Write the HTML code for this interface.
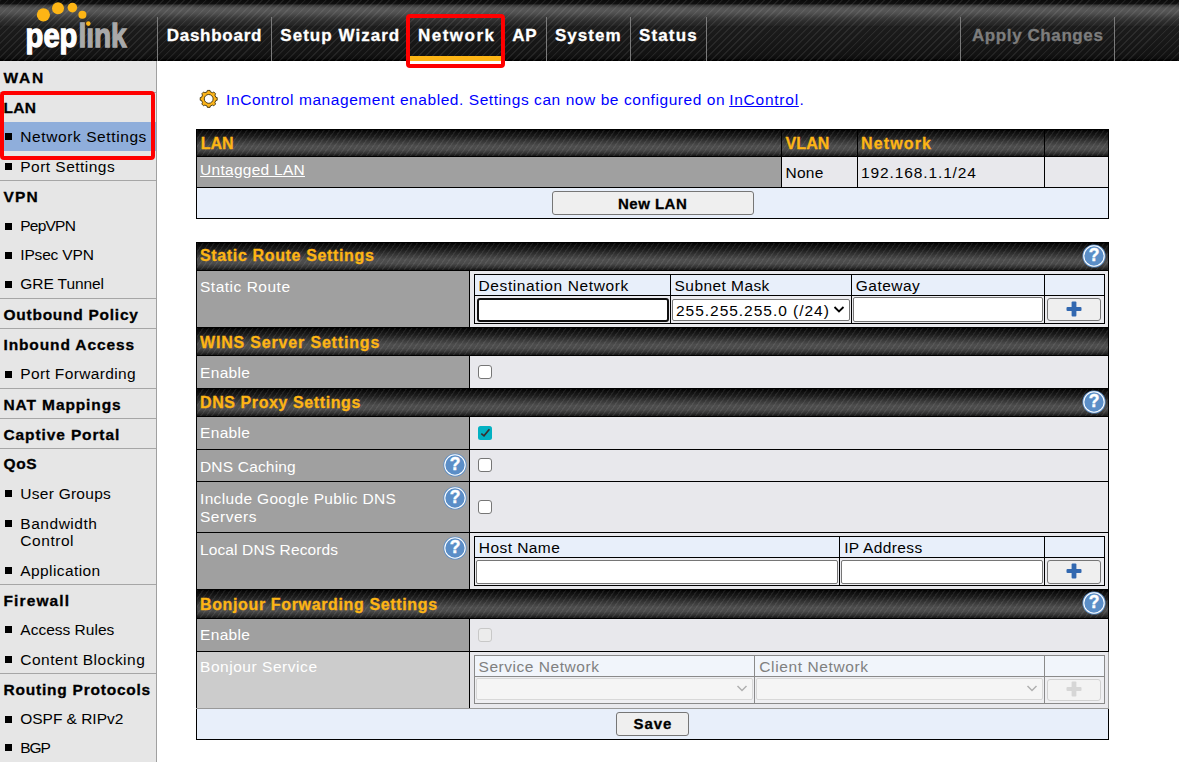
<!DOCTYPE html>
<html><head><meta charset="utf-8"><style>
html,body{margin:0;padding:0;width:1179px;height:762px;overflow:hidden;background:#fff;}
body{position:relative;font-family:"Liberation Sans",sans-serif;}
div{position:absolute;box-sizing:border-box;}
.t{position:absolute;white-space:nowrap;font-family:"Liberation Sans",sans-serif;}
svg{overflow:visible}
</style></head><body>
<div style="left:0px;top:0px;width:1179px;height:61px;background:repeating-linear-gradient(135deg, rgba(255,255,255,0.08) 0px, rgba(255,255,255,0.08) 0.9px, rgba(255,255,255,0) 1.6px, rgba(255,255,255,0) 5px),linear-gradient(to bottom, #0a0a0a 0px, #101010 3.5px, #3a3a3a 5.5px, #525252 8px, #565656 11px, #4c4c4c 14px, #383838 18px, #2a2a2a 22px, #252525 25px, #1c1c1c 26.5px, #181818 40px, #121212 55px, #0c0c0c 59px, #000 60px, #000 61px)"></div>
<div style="left:157px;top:17px;width:1px;height:44px;background:#7a7a7a"></div>
<div style="left:271px;top:17px;width:1px;height:44px;background:#7a7a7a"></div>
<div style="left:408px;top:17px;width:1px;height:44px;background:#7a7a7a"></div>
<div style="left:503px;top:17px;width:1px;height:44px;background:#7a7a7a"></div>
<div style="left:546px;top:17px;width:1px;height:44px;background:#7a7a7a"></div>
<div style="left:630px;top:17px;width:1px;height:44px;background:#7a7a7a"></div>
<div style="left:706px;top:17px;width:1px;height:44px;background:#7a7a7a"></div>
<div style="left:960px;top:17px;width:1px;height:44px;background:#7a7a7a"></div>
<div style="left:1114px;top:17px;width:1px;height:44px;background:#7a7a7a"></div>
<span class="t" style="left:166.70px;top:25.61px;font-size:17px;font-weight:bold;color:#fff;letter-spacing:0.738px;line-height:20px;-webkit-text-stroke:0.3px #fff;">Dashboard</span>
<span class="t" style="left:280.30px;top:25.61px;font-size:17px;font-weight:bold;color:#fff;letter-spacing:1.036px;line-height:20px;-webkit-text-stroke:0.3px #fff;">Setup Wizard</span>
<span class="t" style="left:418.00px;top:25.61px;font-size:17px;font-weight:bold;color:#fff;letter-spacing:1.483px;line-height:20px;-webkit-text-stroke:0.3px #fff;">Network</span>
<span class="t" style="left:512.30px;top:25.61px;font-size:17px;font-weight:bold;color:#fff;letter-spacing:0.700px;line-height:20px;-webkit-text-stroke:0.3px #fff;">AP</span>
<span class="t" style="left:555.00px;top:25.61px;font-size:17px;font-weight:bold;color:#fff;letter-spacing:1.020px;line-height:20px;-webkit-text-stroke:0.3px #fff;">System</span>
<span class="t" style="left:639.00px;top:25.61px;font-size:17px;font-weight:bold;color:#fff;letter-spacing:1.140px;line-height:20px;-webkit-text-stroke:0.3px #fff;">Status</span>
<span class="t" style="left:972.00px;top:25.61px;font-size:17px;font-weight:bold;color:#7d7d7d;letter-spacing:0.592px;line-height:20px;-webkit-text-stroke:0.3px #7d7d7d;">Apply Changes</span>
<div style="left:409px;top:56px;width:94px;height:5px;background:#fdb515"></div>
<svg style="position:absolute;left:0;top:0" width="157" height="61" viewBox="0 0 157 61">
<g fill="#fdb515"><circle cx="43.4" cy="14.8" r="6.6"/><circle cx="58" cy="8.3" r="6"/><circle cx="72.4" cy="7.6" r="4.8"/><circle cx="82.4" cy="14.8" r="4"/><circle cx="88.3" cy="23.6" r="2.3"/></g>
<text x="25.6" y="47.3" font-family="Liberation Sans" font-weight="bold" font-size="34" fill="#fff" stroke="#fff" stroke-width="1.3" textLength="51.8" lengthAdjust="spacingAndGlyphs">pep</text>
<text x="78.4" y="47.3" font-family="Liberation Sans" font-weight="bold" font-size="34" fill="#a9a9a9" stroke="#a9a9a9" stroke-width="1.3" textLength="48.3" lengthAdjust="spacingAndGlyphs">l&#x131;nk</text>
</svg>
<div style="left:0px;top:61px;width:156px;height:701px;background:#e6e6e6"></div>
<div style="left:156px;top:61px;width:1px;height:701px;background:#a0a0a0"></div>
<div style="left:0px;top:92px;width:156px;height:1px;background:#a6a6a6"></div>
<div style="left:0px;top:180px;width:156px;height:1px;background:#a6a6a6"></div>
<div style="left:0px;top:298px;width:156px;height:1px;background:#a6a6a6"></div>
<div style="left:0px;top:328px;width:156px;height:1px;background:#a6a6a6"></div>
<div style="left:0px;top:388px;width:156px;height:1px;background:#a6a6a6"></div>
<div style="left:0px;top:418px;width:156px;height:1px;background:#a6a6a6"></div>
<div style="left:0px;top:448px;width:156px;height:1px;background:#a6a6a6"></div>
<div style="left:0px;top:584px;width:156px;height:1px;background:#a6a6a6"></div>
<div style="left:0px;top:673px;width:156px;height:1px;background:#a6a6a6"></div>
<div style="left:0px;top:122px;width:156px;height:29px;background:#8faedb"></div>
<span class="t" style="left:3.50px;top:68.13px;font-size:15.5px;font-weight:bold;color:#000;letter-spacing:1.750px;line-height:20px;-webkit-text-stroke:0.3px #000;">WAN</span>
<span class="t" style="left:3.50px;top:98.13px;font-size:15.5px;font-weight:bold;color:#000;letter-spacing:0.300px;line-height:20px;-webkit-text-stroke:0.3px #000;">LAN</span>
<div style="left:5px;top:133.0px;width:7px;height:7px;background:#000"></div>
<span class="t" style="left:20.30px;top:126.63px;font-size:15.5px;font-weight:normal;color:#000;letter-spacing:0.593px;line-height:20px;">Network Settings</span>
<div style="left:5px;top:163.0px;width:7px;height:7px;background:#000"></div>
<span class="t" style="left:20.30px;top:156.63px;font-size:15.5px;font-weight:normal;color:#000;letter-spacing:0.467px;line-height:20px;">Port Settings</span>
<span class="t" style="left:3.50px;top:187.13px;font-size:15.5px;font-weight:bold;color:#000;letter-spacing:1.150px;line-height:20px;-webkit-text-stroke:0.3px #000;">VPN</span>
<div style="left:5px;top:222.5px;width:7px;height:7px;background:#000"></div>
<span class="t" style="left:20.30px;top:216.13px;font-size:15.5px;font-weight:normal;color:#000;letter-spacing:-0.780px;line-height:20px;">PepVPN</span>
<div style="left:5px;top:251.5px;width:7px;height:7px;background:#000"></div>
<span class="t" style="left:20.30px;top:245.13px;font-size:15.5px;font-weight:normal;color:#000;letter-spacing:-0.175px;line-height:20px;">IPsec VPN</span>
<div style="left:5px;top:280.5px;width:7px;height:7px;background:#000"></div>
<span class="t" style="left:20.30px;top:274.13px;font-size:15.5px;font-weight:normal;color:#000;letter-spacing:-0.078px;line-height:20px;">GRE Tunnel</span>
<span class="t" style="left:3.50px;top:305.13px;font-size:15.5px;font-weight:bold;color:#000;letter-spacing:0.743px;line-height:20px;-webkit-text-stroke:0.3px #000;">Outbound Policy</span>
<span class="t" style="left:3.50px;top:334.73px;font-size:15.5px;font-weight:bold;color:#000;letter-spacing:0.877px;line-height:20px;-webkit-text-stroke:0.3px #000;">Inbound Access</span>
<div style="left:5px;top:370.5px;width:7px;height:7px;background:#000"></div>
<span class="t" style="left:20.30px;top:364.13px;font-size:15.5px;font-weight:normal;color:#000;letter-spacing:0.364px;line-height:20px;">Port Forwarding</span>
<span class="t" style="left:3.50px;top:394.83px;font-size:15.5px;font-weight:bold;color:#000;letter-spacing:0.891px;line-height:20px;-webkit-text-stroke:0.3px #000;">NAT Mappings</span>
<span class="t" style="left:3.50px;top:424.73px;font-size:15.5px;font-weight:bold;color:#000;letter-spacing:0.885px;line-height:20px;-webkit-text-stroke:0.3px #000;">Captive Portal</span>
<span class="t" style="left:3.50px;top:454.33px;font-size:15.5px;font-weight:bold;color:#000;letter-spacing:0.600px;line-height:20px;-webkit-text-stroke:0.3px #000;">QoS</span>
<div style="left:5px;top:490.0px;width:7px;height:7px;background:#000"></div>
<span class="t" style="left:20.30px;top:483.63px;font-size:15.5px;font-weight:normal;color:#000;letter-spacing:0.260px;line-height:20px;">User Groups</span>
<div style="left:5px;top:519.9px;width:7px;height:7px;background:#000"></div>
<span class="t" style="left:20.30px;top:513.53px;font-size:15.5px;font-weight:normal;color:#000;letter-spacing:0.537px;line-height:20px;">Bandwidth</span>
<span class="t" style="left:20.30px;top:531.43px;font-size:15.5px;font-weight:normal;color:#000;letter-spacing:0.550px;line-height:20px;">Control</span>
<div style="left:5px;top:567.0px;width:7px;height:7px;background:#000"></div>
<span class="t" style="left:20.30px;top:560.63px;font-size:15.5px;font-weight:normal;color:#000;letter-spacing:0.410px;line-height:20px;">Application</span>
<span class="t" style="left:3.50px;top:590.63px;font-size:15.5px;font-weight:bold;color:#000;letter-spacing:1.114px;line-height:20px;-webkit-text-stroke:0.3px #000;">Firewall</span>
<div style="left:5px;top:626.4px;width:7px;height:7px;background:#000"></div>
<span class="t" style="left:20.30px;top:620.03px;font-size:15.5px;font-weight:normal;color:#000;letter-spacing:0.009px;line-height:20px;">Access Rules</span>
<div style="left:5px;top:656.3px;width:7px;height:7px;background:#000"></div>
<span class="t" style="left:20.30px;top:649.93px;font-size:15.5px;font-weight:normal;color:#000;letter-spacing:0.487px;line-height:20px;">Content Blocking</span>
<span class="t" style="left:3.50px;top:679.73px;font-size:15.5px;font-weight:bold;color:#000;letter-spacing:0.775px;line-height:20px;-webkit-text-stroke:0.3px #000;">Routing Protocols</span>
<div style="left:5px;top:715.5px;width:7px;height:7px;background:#000"></div>
<span class="t" style="left:20.30px;top:709.13px;font-size:15.5px;font-weight:normal;color:#000;letter-spacing:-0.036px;line-height:20px;">OSPF &amp; RIPv2</span>
<div style="left:5px;top:743.9px;width:7px;height:7px;background:#000"></div>
<span class="t" style="left:20.30px;top:737.53px;font-size:15.5px;font-weight:normal;color:#000;letter-spacing:-1.050px;line-height:20px;">BGP</span>
<svg style="position:absolute;left:0;top:0" width="230" height="120"><path fill="#fbb41a" stroke="#2a2000" stroke-width="0.8" stroke-linejoin="round" fill-rule="evenodd" d="M207.06,91.79 L207.35,90.41 L210.05,90.41 L210.34,91.79 L212.57,92.71 L213.75,91.94 L215.66,93.85 L214.89,95.03 L215.81,97.26 L217.19,97.55 L217.19,100.25 L215.81,100.54 L214.89,102.77 L215.66,103.95 L213.75,105.86 L212.57,105.09 L210.34,106.01 L210.05,107.39 L207.35,107.39 L207.06,106.01 L204.83,105.09 L203.65,105.86 L201.74,103.95 L202.51,102.77 L201.59,100.54 L200.21,100.25 L200.21,97.55 L201.59,97.26 L202.51,95.03 L201.74,93.85 L203.65,91.94 L204.83,92.71 Z M213.10,98.90 A4.4,4.4 0 1 0 204.30,98.90 A4.4,4.4 0 1 0 213.10,98.90 Z"/></svg>
<span class="t" style="left:226.10px;top:90.33px;font-size:15.5px;font-weight:normal;color:#0000ff;letter-spacing:0.563px;line-height:20px;">InControl management enabled. Settings can now be configured on</span>
<span class="t" style="left:729.20px;top:90.33px;font-size:15.5px;font-weight:normal;color:#0000ff;letter-spacing:0.750px;line-height:20px;text-decoration:underline;">InControl</span>
<span class="t" style="left:799.50px;top:90.33px;font-size:15.5px;font-weight:normal;color:#0000ff;letter-spacing:0.000px;line-height:20px;">.</span>
<div style="left:196px;top:129px;width:913px;height:90px;background:#000"></div>
<div style="left:197px;top:130px;width:911px;height:26px;background:repeating-linear-gradient(125deg, rgba(255,255,255,0.075) 0px, rgba(255,255,255,0.075) 0.9px, rgba(255,255,255,0) 1.6px, rgba(255,255,255,0) 4.5px),linear-gradient(to bottom, #000 0%, #0c0c0c 8%, #1c1c1c 25%, #383838 45%, #4e4e4e 62%, #4a4a4a 76%, #303030 90%, #141414 100%)"></div>
<div style="left:197px;top:157px;width:584px;height:30px;background:#a0a0a0"></div>
<div style="left:782px;top:157px;width:75px;height:30px;background:#e8e8ec"></div>
<div style="left:858px;top:157px;width:186px;height:30px;background:#e8e8ec"></div>
<div style="left:1045px;top:157px;width:63px;height:30px;background:#e8e8ec"></div>
<div style="left:197px;top:188px;width:911px;height:30px;background:#e8effa"></div>
<div style="left:781px;top:130px;width:1px;height:26px;background:#000"></div>
<div style="left:857px;top:130px;width:1px;height:26px;background:#000"></div>
<div style="left:1044px;top:130px;width:1px;height:26px;background:#000"></div>
<span class="t" style="left:200.70px;top:133.76px;font-size:16px;font-weight:bold;color:#fdb515;letter-spacing:-0.050px;line-height:20px;-webkit-text-stroke:0.3px #fdb515;">LAN</span>
<span class="t" style="left:785.60px;top:133.66px;font-size:16px;font-weight:bold;color:#fdb515;letter-spacing:0.067px;line-height:20px;-webkit-text-stroke:0.3px #fdb515;">VLAN</span>
<span class="t" style="left:861.10px;top:133.66px;font-size:16px;font-weight:bold;color:#fdb515;letter-spacing:1.133px;line-height:20px;-webkit-text-stroke:0.3px #fdb515;">Network</span>
<span class="t" style="left:200.10px;top:159.53px;font-size:15.5px;font-weight:normal;color:#fff;letter-spacing:0.264px;line-height:20px;text-decoration:underline;">Untagged LAN</span>
<span class="t" style="left:785.60px;top:162.83px;font-size:15.5px;font-weight:normal;color:#000;letter-spacing:0.200px;line-height:20px;">None</span>
<span class="t" style="left:861.10px;top:162.83px;font-size:15.5px;font-weight:normal;color:#000;letter-spacing:0.877px;line-height:20px;">192.168.1.1/24</span>
<div style="left:552px;top:191px;width:202px;height:24px;background:#efefef;border:1px solid #767676;border-radius:3px"></div>
<span class="t" style="left:618.00px;top:194.20px;font-size:15px;font-weight:bold;color:#000;letter-spacing:0.483px;line-height:20px;-webkit-text-stroke:0.3px #000;">New LAN</span>
<div style="left:196px;top:242px;width:913px;height:498px;background:#000"></div>
<div style="left:197px;top:243px;width:911px;height:27px;background:repeating-linear-gradient(125deg, rgba(255,255,255,0.075) 0px, rgba(255,255,255,0.075) 0.9px, rgba(255,255,255,0) 1.6px, rgba(255,255,255,0) 4.5px),linear-gradient(to bottom, #000 0%, #0c0c0c 8%, #1c1c1c 25%, #383838 45%, #4e4e4e 62%, #4a4a4a 76%, #303030 90%, #141414 100%)"></div>
<span class="t" style="left:200.00px;top:245.96px;font-size:16px;font-weight:bold;color:#fdb515;letter-spacing:0.645px;line-height:20px;-webkit-text-stroke:0.3px #fdb515;">Static Route Settings</span>
<svg style="position:absolute;left:1082px;top:243.8px" width="24" height="24" viewBox="0 0 24 24"><circle cx="12" cy="12" r="11.6" fill="#5b8ec7"/><circle cx="12" cy="12" r="10.2" fill="none" stroke="#fff" stroke-width="1.1"/><text x="12" y="17.2" text-anchor="middle" font-family="Liberation Sans" font-weight="bold" font-size="17.5" fill="#fff" stroke="#fff" stroke-width="0.4">?</text></svg>
<div style="left:197px;top:271px;width:272px;height:56px;background:#a0a0a0"></div>
<div style="left:470px;top:271px;width:638px;height:56px;background:#e8e8ec"></div>
<div style="left:197px;top:328px;width:911px;height:27px;background:repeating-linear-gradient(125deg, rgba(255,255,255,0.075) 0px, rgba(255,255,255,0.075) 0.9px, rgba(255,255,255,0) 1.6px, rgba(255,255,255,0) 4.5px),linear-gradient(to bottom, #000 0%, #0c0c0c 8%, #1c1c1c 25%, #383838 45%, #4e4e4e 62%, #4a4a4a 76%, #303030 90%, #141414 100%)"></div>
<span class="t" style="left:200.00px;top:332.96px;font-size:16px;font-weight:bold;color:#fdb515;letter-spacing:0.826px;line-height:20px;-webkit-text-stroke:0.3px #fdb515;">WINS Server Settings</span>
<div style="left:197px;top:356px;width:272px;height:32px;background:#a0a0a0"></div>
<div style="left:470px;top:356px;width:638px;height:32px;background:#e8e8ec"></div>
<div style="left:197px;top:389px;width:911px;height:27px;background:repeating-linear-gradient(125deg, rgba(255,255,255,0.075) 0px, rgba(255,255,255,0.075) 0.9px, rgba(255,255,255,0) 1.6px, rgba(255,255,255,0) 4.5px),linear-gradient(to bottom, #000 0%, #0c0c0c 8%, #1c1c1c 25%, #383838 45%, #4e4e4e 62%, #4a4a4a 76%, #303030 90%, #141414 100%)"></div>
<span class="t" style="left:200.00px;top:392.96px;font-size:16px;font-weight:bold;color:#fdb515;letter-spacing:0.594px;line-height:20px;-webkit-text-stroke:0.3px #fdb515;">DNS Proxy Settings</span>
<svg style="position:absolute;left:1082px;top:389.8px" width="24" height="24" viewBox="0 0 24 24"><circle cx="12" cy="12" r="11.6" fill="#5b8ec7"/><circle cx="12" cy="12" r="10.2" fill="none" stroke="#fff" stroke-width="1.1"/><text x="12" y="17.2" text-anchor="middle" font-family="Liberation Sans" font-weight="bold" font-size="17.5" fill="#fff" stroke="#fff" stroke-width="0.4">?</text></svg>
<div style="left:197px;top:417px;width:272px;height:32px;background:#a0a0a0"></div>
<div style="left:470px;top:417px;width:638px;height:32px;background:#e8e8ec"></div>
<div style="left:197px;top:450px;width:272px;height:31px;background:#a0a0a0"></div>
<div style="left:470px;top:450px;width:638px;height:31px;background:#e8e8ec"></div>
<div style="left:197px;top:482px;width:272px;height:50px;background:#a0a0a0"></div>
<div style="left:470px;top:482px;width:638px;height:50px;background:#e8e8ec"></div>
<div style="left:197px;top:533px;width:272px;height:56px;background:#a0a0a0"></div>
<div style="left:470px;top:533px;width:638px;height:56px;background:#e8e8ec"></div>
<div style="left:197px;top:590px;width:911px;height:28px;background:repeating-linear-gradient(125deg, rgba(255,255,255,0.075) 0px, rgba(255,255,255,0.075) 0.9px, rgba(255,255,255,0) 1.6px, rgba(255,255,255,0) 4.5px),linear-gradient(to bottom, #000 0%, #0c0c0c 8%, #1c1c1c 25%, #383838 45%, #4e4e4e 62%, #4a4a4a 76%, #303030 90%, #141414 100%)"></div>
<span class="t" style="left:200.00px;top:594.96px;font-size:16px;font-weight:bold;color:#fdb515;letter-spacing:0.638px;line-height:20px;-webkit-text-stroke:0.3px #fdb515;">Bonjour Forwarding Settings</span>
<svg style="position:absolute;left:1082px;top:591.3px" width="24" height="24" viewBox="0 0 24 24"><circle cx="12" cy="12" r="11.6" fill="#5b8ec7"/><circle cx="12" cy="12" r="10.2" fill="none" stroke="#fff" stroke-width="1.1"/><text x="12" y="17.2" text-anchor="middle" font-family="Liberation Sans" font-weight="bold" font-size="17.5" fill="#fff" stroke="#fff" stroke-width="0.4">?</text></svg>
<div style="left:197px;top:619px;width:272px;height:32px;background:#a0a0a0"></div>
<div style="left:470px;top:619px;width:638px;height:32px;background:#e8e8ec"></div>
<div style="left:197px;top:652px;width:272px;height:56px;background:#cccccc"></div>
<div style="left:470px;top:652px;width:638px;height:56px;background:#e9e9ed"></div>
<div style="left:196px;top:708px;width:913px;height:1px;background:#999"></div>
<div style="left:197px;top:709px;width:911px;height:30px;background:#e8effa"></div>
<div style="left:1108px;top:652px;width:1px;height:57px;background:#999"></div>
<span class="t" style="left:200.00px;top:276.83px;font-size:15.5px;font-weight:normal;color:#fff;letter-spacing:0.509px;line-height:20px;">Static Route</span>
<span class="t" style="left:200.00px;top:362.93px;font-size:15.5px;font-weight:normal;color:#fff;letter-spacing:0.340px;line-height:20px;">Enable</span>
<span class="t" style="left:200.00px;top:423.43px;font-size:15.5px;font-weight:normal;color:#fff;letter-spacing:0.340px;line-height:20px;">Enable</span>
<span class="t" style="left:200.00px;top:457.13px;font-size:15.5px;font-weight:normal;color:#fff;letter-spacing:0.180px;line-height:20px;">DNS Caching</span>
<span class="t" style="left:200.00px;top:489.13px;font-size:15.5px;font-weight:normal;color:#fff;letter-spacing:0.337px;line-height:20px;">Include Google Public DNS</span>
<span class="t" style="left:200.00px;top:507.13px;font-size:15.5px;font-weight:normal;color:#fff;letter-spacing:0.517px;line-height:20px;">Servers</span>
<span class="t" style="left:200.00px;top:540.13px;font-size:15.5px;font-weight:normal;color:#fff;letter-spacing:0.119px;line-height:20px;">Local DNS Records</span>
<span class="t" style="left:200.00px;top:625.33px;font-size:15.5px;font-weight:normal;color:#fff;letter-spacing:0.340px;line-height:20px;">Enable</span>
<span class="t" style="left:200.00px;top:657.43px;font-size:15.5px;font-weight:normal;color:#ffffff;letter-spacing:0.543px;line-height:20px;">Bonjour Service</span>
<svg style="position:absolute;left:443px;top:453.4px" width="24" height="24" viewBox="0 0 24 24"><circle cx="12" cy="12" r="11.6" fill="#5b8ec7"/><circle cx="12" cy="12" r="10.2" fill="none" stroke="#fff" stroke-width="1.1"/><text x="12" y="17.2" text-anchor="middle" font-family="Liberation Sans" font-weight="bold" font-size="17.5" fill="#fff" stroke="#fff" stroke-width="0.4">?</text></svg>
<svg style="position:absolute;left:443px;top:485.8px" width="24" height="24" viewBox="0 0 24 24"><circle cx="12" cy="12" r="11.6" fill="#5b8ec7"/><circle cx="12" cy="12" r="10.2" fill="none" stroke="#fff" stroke-width="1.1"/><text x="12" y="17.2" text-anchor="middle" font-family="Liberation Sans" font-weight="bold" font-size="17.5" fill="#fff" stroke="#fff" stroke-width="0.4">?</text></svg>
<svg style="position:absolute;left:443px;top:535.8px" width="24" height="24" viewBox="0 0 24 24"><circle cx="12" cy="12" r="11.6" fill="#5b8ec7"/><circle cx="12" cy="12" r="10.2" fill="none" stroke="#fff" stroke-width="1.1"/><text x="12" y="17.2" text-anchor="middle" font-family="Liberation Sans" font-weight="bold" font-size="17.5" fill="#fff" stroke="#fff" stroke-width="0.4">?</text></svg>
<div style="left:478px;top:364.5px;width:14px;height:14px;background:#fff;border:1.4px solid #767676;border-radius:3px;box-sizing:border-box"></div>
<svg style="position:absolute;left:478px;top:425.7px" width="14" height="14" viewBox="0 0 14 14"><rect x="0" y="0" width="14" height="14" rx="2.5" fill="#03b1c2"/><path d="M3.3 7.6 L6 9.8 L11.4 3.2" fill="none" stroke="#3a2e2e" stroke-width="1.7"/></svg>
<div style="left:478px;top:458.1px;width:14px;height:14px;background:#fff;border:1.4px solid #767676;border-radius:3px;box-sizing:border-box"></div>
<div style="left:478px;top:500px;width:14px;height:14px;background:#fff;border:1.4px solid #767676;border-radius:3px;box-sizing:border-box"></div>
<div style="left:478px;top:627.5px;width:14px;height:14px;background:#ececec;border:1.4px solid #c8c8c8;border-radius:3px;box-sizing:border-box"></div>
<div style="left:474px;top:274px;width:631px;height:50px;background:#000"></div>
<div style="left:475px;top:275px;width:629px;height:20px;background:#e8effa"></div>
<div style="left:475px;top:296px;width:629px;height:27px;background:#ececf0"></div>
<div style="left:670px;top:274px;width:1px;height:49px;background:#000"></div>
<div style="left:851px;top:274px;width:1px;height:49px;background:#000"></div>
<div style="left:1044px;top:274px;width:1px;height:49px;background:#000"></div>
<span class="t" style="left:478.50px;top:275.88px;font-size:15.5px;font-weight:normal;color:#000;letter-spacing:0.611px;line-height:20px;">Destination Network</span>
<span class="t" style="left:674.60px;top:275.83px;font-size:15.5px;font-weight:normal;color:#000;letter-spacing:0.430px;line-height:20px;">Subnet Mask</span>
<span class="t" style="left:855.80px;top:275.93px;font-size:15.5px;font-weight:normal;color:#000;letter-spacing:0.467px;line-height:20px;">Gateway</span>
<div style="left:477px;top:298px;width:192px;height:24px;background:#fff;border:2px solid #101010;border-radius:3px;box-sizing:border-box"></div>
<div style="left:672px;top:299px;width:178px;height:22px;background:#fff;border:1px solid #767676;border-radius:2px;box-sizing:border-box"></div>
<span class="t" style="left:676.00px;top:300.93px;font-size:15.5px;font-weight:normal;color:#000;letter-spacing:0.972px;line-height:20px;">255.255.255.0 (/24)</span>
<svg style="position:absolute;left:833px;top:305px" width="12" height="9" viewBox="0 0 12 9"><path d="M1.5 2 L6 6.5 L10.5 2" fill="none" stroke="#000" stroke-width="1.8"/></svg>
<div style="left:853px;top:297px;width:190px;height:25px;background:#fff;border:1px solid #767676;border-radius:2px;box-sizing:border-box"></div>
<div style="left:1047px;top:298px;width:54px;height:23px;background:#efefef;border:1px solid #767676;border-radius:3px;box-sizing:border-box"></div>
<svg style="position:absolute;left:1065.5px;top:300.7px" width="16" height="16" viewBox="0 0 16 16"><g fill="#3268b0"><rect x="0.5" y="5.9" width="15" height="4.2" rx="1"/><rect x="5.6" y="0.5" width="4.8" height="15" rx="1"/></g></svg>
<div style="left:474px;top:536px;width:631px;height:50px;background:#000"></div>
<div style="left:475px;top:537px;width:629px;height:20px;background:#e8effa"></div>
<div style="left:475px;top:558px;width:629px;height:27px;background:#ececf0"></div>
<div style="left:839px;top:536px;width:1px;height:49px;background:#000"></div>
<div style="left:1044px;top:536px;width:1px;height:49px;background:#000"></div>
<span class="t" style="left:478.80px;top:537.83px;font-size:15.5px;font-weight:normal;color:#000;letter-spacing:0.438px;line-height:20px;">Host Name</span>
<span class="t" style="left:844.20px;top:538.13px;font-size:15.5px;font-weight:normal;color:#000;letter-spacing:0.367px;line-height:20px;">IP Address</span>
<div style="left:476px;top:560px;width:362px;height:24px;background:#fff;border:1px solid #767676;border-radius:2px;box-sizing:border-box"></div>
<div style="left:841px;top:560px;width:202px;height:24px;background:#fff;border:1px solid #767676;border-radius:2px;box-sizing:border-box"></div>
<div style="left:1047px;top:560px;width:54px;height:24px;background:#efefef;border:1px solid #767676;border-radius:3px;box-sizing:border-box"></div>
<svg style="position:absolute;left:1065.5px;top:563.2px" width="16" height="16" viewBox="0 0 16 16"><g fill="#3268b0"><rect x="0.5" y="5.9" width="15" height="4.2" rx="1"/><rect x="5.6" y="0.5" width="4.8" height="15" rx="1"/></g></svg>
<div style="left:474px;top:655px;width:631px;height:49px;background:#8a8a8a"></div>
<div style="left:475px;top:656px;width:629px;height:20px;background:#f1f5fb"></div>
<div style="left:475px;top:677px;width:629px;height:26px;background:#efeff2"></div>
<div style="left:754px;top:655px;width:1px;height:48px;background:#8a8a8a"></div>
<div style="left:1044px;top:655px;width:1px;height:48px;background:#8a8a8a"></div>
<span class="t" style="left:478.50px;top:657.13px;font-size:15.5px;font-weight:normal;color:#808080;letter-spacing:0.543px;line-height:20px;">Service Network</span>
<span class="t" style="left:759.30px;top:657.13px;font-size:15.5px;font-weight:normal;color:#808080;letter-spacing:0.608px;line-height:20px;">Client Network</span>
<div style="left:476px;top:678px;width:277px;height:22px;background:#f5f5f5;border:1px solid #d8d8d8;border-radius:2px;box-sizing:border-box"></div>
<div style="left:756px;top:678px;width:287px;height:22px;background:#f5f5f5;border:1px solid #d8d8d8;border-radius:2px;box-sizing:border-box"></div>
<svg style="position:absolute;left:736px;top:684px" width="12" height="9" viewBox="0 0 12 9"><path d="M1.5 2 L6 6.5 L10.5 2" fill="none" stroke="#b0b0b0" stroke-width="1.5"/></svg>
<svg style="position:absolute;left:1026px;top:684px" width="12" height="9" viewBox="0 0 12 9"><path d="M1.5 2 L6 6.5 L10.5 2" fill="none" stroke="#b0b0b0" stroke-width="1.5"/></svg>
<div style="left:1047px;top:679px;width:54px;height:22px;background:#f3f3f3;border:1px solid #d0d0d0;border-radius:3px;box-sizing:border-box"></div>
<svg style="position:absolute;left:1065.5px;top:681.2px" width="16" height="16" viewBox="0 0 16 16"><g fill="#d6d6d6"><rect x="0.5" y="5.9" width="15" height="4.2" rx="1"/><rect x="5.6" y="0.5" width="4.8" height="15" rx="1"/></g></svg>
<div style="left:616px;top:712px;width:73px;height:24px;background:#efefef;border:1px solid #767676;border-radius:3px;box-sizing:border-box"></div>
<span class="t" style="left:633.50px;top:714.30px;font-size:15px;font-weight:bold;color:#000;letter-spacing:0.900px;line-height:20px;-webkit-text-stroke:0.3px #000;">Save</span>
<div style="left:406px;top:14px;width:99px;height:54px;border:4px solid #ff0000;border-radius:4px;box-sizing:border-box"></div>
<div style="left:0px;top:91px;width:155px;height:69px;border:4px solid #ff0000;border-radius:4px;box-sizing:border-box"></div>
</body></html>
